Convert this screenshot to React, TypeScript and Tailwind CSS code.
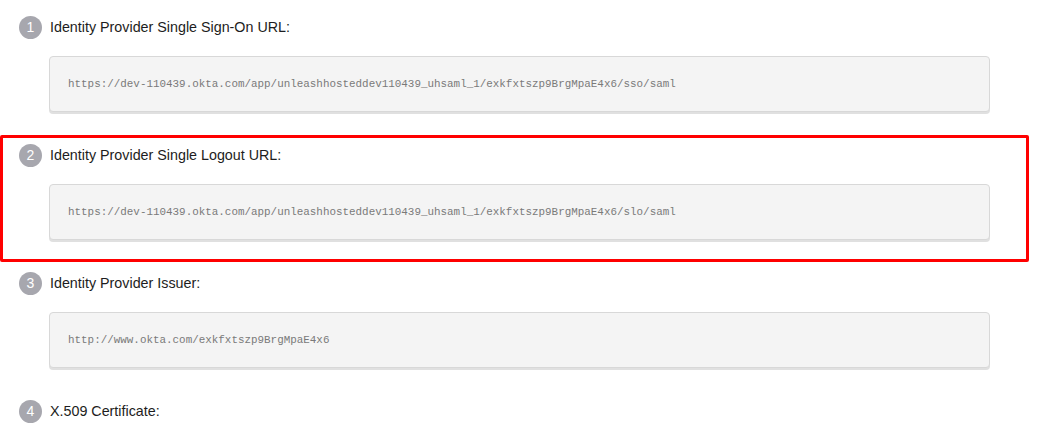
import React from "react";

const items = [
  {
    n: 1,
    label: "Identity Provider Single Sign-On URL:",
    value:
      "https://dev-110439.okta.com/app/unleashhosteddev110439_uhsaml_1/exkfxtszp9BrgMpaE4x6/sso/saml",
  },
  {
    n: 2,
    label: "Identity Provider Single Logout URL:",
    value:
      "https://dev-110439.okta.com/app/unleashhosteddev110439_uhsaml_1/exkfxtszp9BrgMpaE4x6/slo/saml",
  },
  {
    n: 3,
    label: "Identity Provider Issuer:",
    value: "http://www.okta.com/exkfxtszp9BrgMpaE4x6",
  },
];

function Step({ n, label }: { n: number; label: string }) {
  return (
    <div className="flex items-center gap-[8px] h-[24px]">
      <div className="w-[23px] h-[23px] rounded-full bg-[#a7a7ae] text-white text-[14px] flex items-center justify-center font-['Liberation_Sans',sans-serif] leading-none">
        {n}
      </div>
      <div className="text-[14.3px] text-[#1d1d21] font-['Liberation_Sans',sans-serif] leading-none pt-[1px]">
        {label}
      </div>
    </div>
  );
}

export default function App() {
  return (
    <div className="relative w-[1039px] h-[430px] bg-white overflow-hidden">
      <div className="pt-[15px] pl-[19px]">
        {items.map((it) => (
          <div key={it.n} className="h-[128px]">
            <Step n={it.n} label={it.label} />
            <div className="ml-[30px] mt-[17px] w-[941px] h-[56px] rounded-[4px] border border-[#d8d8d8] bg-[#f4f4f4] shadow-[0_2px_0_0_#e0e0e0] flex items-center pl-[18px] pt-[1px] font-['Liberation_Mono',monospace] text-[10.9px] text-[#7a7a7a]">
              {it.value}
            </div>
          </div>
        ))}
        <Step n={4} label="X.509 Certificate:" />
      </div>
      <div className="absolute left-0 top-[135px] w-[1029px] h-[127px] border-[3px] border-[#ff0000] rounded-[2px] pointer-events-none" />
    </div>
  );
}
